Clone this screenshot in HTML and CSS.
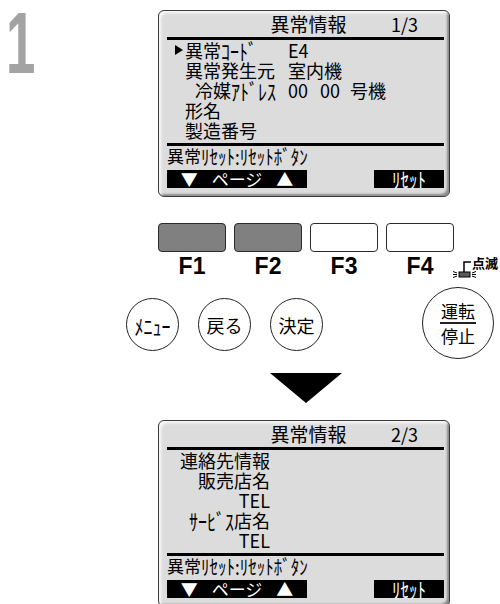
FILE: index.html
```html
<!DOCTYPE html>
<html lang="ja">
<head>
    <meta charset="UTF-8">
    <meta name="viewport" content="width=device-width, initial-scale=1.0">
    <link rel="stylesheet" href="styles.css">
</head>
<body>
    <div class="page">
        <div class="step"><span class="step-num">1</span></div>

        <div class="device">
            <div class="screen">
                <div class="title-row">
                    <span class="title">異常情報</span>
                    <span class="page-no">1/3</span>
                </div>
                <div class="rule"></div>
                <div class="rows">
                    <div class="row"><span class="marker"></span><span class="label">異常<span class="hw">ｺｰﾄﾞ</span></span><span class="value">E4</span></div>
                    <div class="row"><span></span><span class="label">異常発生元</span><span class="value">室内機</span></div>
                    <div class="row"><span></span><span class="label sub">冷媒<span class="hw">ｱﾄﾞﾚｽ</span></span><span class="value"><span class="num">00</span><span class="num num-2">00</span>号機</span></div>
                    <div class="row"><span></span><span class="label">形名</span></div>
                    <div class="row"><span></span><span class="label">製造番号</span></div>
                </div>
                <div class="rule rule-bottom"></div>
                <div class="hint">異常<span class="hw">ﾘｾｯﾄ:ﾘｾｯﾄﾎﾞﾀﾝ</span></div>
                <div class="soft-keys">
                    <span class="soft page-key"><span>▼</span><span>ページ</span><span>▲</span></span>
                    <span class="soft reset-key"><span class="hw">ﾘｾｯﾄ</span></span>
                </div>
            </div>

            <div class="keys">
                <div class="key key-on"></div>
                <div class="key key-on"></div>
                <div class="key"></div>
                <div class="key"></div>
            </div>
            <div class="key-labels">
                <span class="key-label">F1</span>
                <span class="key-label">F2</span>
                <span class="key-label">F3</span>
                <span class="key-label">F4</span>
                <div class="lamp">
                    <svg width="50" height="25" viewBox="0 0 50 25">
                        <path d="M14 17 V7 H21" fill="none" stroke="#000" stroke-width="1.5"/>
                        <rect x="9" y="17" width="11" height="5" fill="#5a5a5a" stroke="#000" stroke-width="1"/>
                        <g stroke="#000" stroke-width="1">
                            <line x1="7" y1="18" x2="3" y2="16.5"/>
                            <line x1="7" y1="19.5" x2="3" y2="19.5"/>
                            <line x1="7" y1="21" x2="3" y2="22.5"/>
                            <line x1="22" y1="18" x2="26" y2="16.5"/>
                            <line x1="22" y1="19.5" x2="26" y2="19.5"/>
                            <line x1="22" y1="21" x2="26" y2="22.5"/>
                        </g>
                    </svg>
                    <span class="lamp-text">点滅</span>
                </div>
            </div>

            <div class="controls">
                <div class="round"><span class="hw">ﾒﾆｭｰ</span></div>
                <div class="round">戻る</div>
                <div class="round">決定</div>
                <div class="power">
                    <span>運転</span>
                    <span class="power-line"></span>
                    <span>停止</span>
                </div>
            </div>

            <div class="next-arrow"></div>

            <div class="screen">
                <div class="title-row">
                    <span class="title">異常情報</span>
                    <span class="page-no">2/3</span>
                </div>
                <div class="rule"></div>
                <div class="rows rows-right">
                    <div>連絡先情報</div>
                    <div>販売店名</div>
                    <div>TEL</div>
                    <div><span class="hw">ｻｰﾋﾞｽ</span>店名</div>
                    <div>TEL</div>
                </div>
                <div class="rule rule-bottom"></div>
                <div class="hint">異常<span class="hw">ﾘｾｯﾄ:ﾘｾｯﾄﾎﾞﾀﾝ</span></div>
                <div class="soft-keys">
                    <span class="soft page-key"><span>▼</span><span>ページ</span><span>▲</span></span>
                    <span class="soft reset-key"><span class="hw">ﾘｾｯﾄ</span></span>
                </div>
            </div>
        </div>
    </div>
</body>
</html>
```

FILE: styles.css
```css
body {
    margin: 0;
    background: #fff;
    font-family: "Noto Sans CJK JP", sans-serif;
    color: #000;
}
.page {
    display: flex;
    height: 604px;
    overflow: hidden;
}
.step {
    width: 126px;
    flex-shrink: 0;
    font-family: "Liberation Sans", sans-serif;
    font-weight: bold;
    font-size: 88px;
    line-height: 86px;
    color: #a3a3a3;
}
.step-num {
    display: inline-block;
    margin-left: 6px;
    transform: scaleX(0.6);
    transform-origin: left top;
}
.device {
    width: 374px;
    flex-shrink: 0;
    padding-top: 10px;
}

/* half-width katakana are drawn as tall as the kanji on the LCD */
.hw {
    display: inline-block;
    line-height: 16px;
    transform: scaleY(1.22);
}

/* LCD screen */
.screen {
    box-sizing: border-box;
    width: 292px;
    height: 187px;
    margin-left: 32px;
    padding: 0 5px 0 8px;
    border: 1px solid #3a3a3a;
    border-radius: 6px;
    background: #dcdcdc;
    box-shadow: inset 3px 3px 3px -1px #fafafa, inset -3px -3px 2px -1px #8c8c8c;
}
.title-row {
    display: grid;
    grid-template-columns: 1fr auto 1fr;
    height: 26px;
    line-height: 26px;
    font-size: 19px;
}
.title {
    grid-column: 2;
    padding-left: 6px;
}
.page-no {
    grid-column: 3;
    justify-self: end;
    margin-right: 26px;
    font-size: 18px;
}
.rule {
    height: 3px;
    background: #000;
}
.rule-bottom {
    margin-top: 3px;
}
.rows {
    height: 100px;
    font-size: 18px;
    line-height: 20px;
}
.row {
    display: grid;
    grid-template-columns: 18px 103px auto;
    align-items: center;
    height: 20px;
}
.marker {
    width: 0;
    height: 0;
    margin-left: 8px;
    border-top: 5px solid transparent;
    border-bottom: 5px solid transparent;
    border-left: 8px solid #000;
}
.label.sub {
    padding-left: 10px;
}
.num {
    display: inline-block;
    width: 32px;
}
.num-2 {
    width: 30px;
}
.rows-right {
    width: 103px;
    text-align: right;
}
.hint {
    font-size: 17px;
    line-height: 20px;
}
.soft-keys {
    display: flex;
    justify-content: space-between;
    margin-top: 4px;
}
.soft {
    display: flex;
    justify-content: center;
    align-items: center;
    gap: 14px;
    height: 18px;
    line-height: 18px;
    background: #000;
    color: #fff;
    font-size: 17px;
}
.page-key {
    width: 140px;
}
.reset-key {
    width: 70px;
}

/* function keys */
.keys {
    display: flex;
    gap: 8px;
    margin: 26px 0 0 32px;
}
.key {
    box-sizing: border-box;
    width: 68px;
    height: 29px;
    border: 1px solid #2a2a2a;
    border-radius: 4px;
    background: #fff;
}
.key-on {
    background: #808080;
}
.key-labels {
    display: flex;
    gap: 8px;
    height: 25px;
    margin: 3px 0 0 32px;
}
.key-label {
    width: 68px;
    text-align: center;
    font-family: "Liberation Sans", sans-serif;
    font-weight: bold;
    font-size: 23px;
    line-height: 23px;
}
.lamp {
    position: relative;
    width: 50px;
    height: 25px;
    margin-left: -12px;
}
.lamp svg {
    display: block;
}
.lamp-text {
    position: absolute;
    left: 22px;
    top: 1px;
    font-size: 13px;
    line-height: 13px;
    font-weight: bold;
}

/* round buttons */
.controls {
    display: flex;
    align-items: flex-start;
    height: 72px;
    margin-top: 7px;
}
.round {
    box-sizing: border-box;
    width: 53px;
    height: 53px;
    margin-top: 11px;
    border: 1.5px solid #222;
    border-radius: 50%;
    display: flex;
    align-items: center;
    justify-content: center;
    font-size: 18px;
}
.round + .round {
    margin-left: 19px;
}
.power {
    box-sizing: border-box;
    width: 72px;
    height: 72px;
    margin-left: 99px;
    border: 1.5px solid #222;
    border-radius: 50%;
    display: flex;
    flex-direction: column;
    align-items: center;
    justify-content: center;
    font-size: 17px;
    line-height: 19px;
}
.power-line {
    width: 36px;
    height: 1.5px;
    margin: 2px 0;
    background: #222;
}

.next-arrow {
    width: 0;
    height: 0;
    margin: 14px 0 17px 144px;
    border-left: 36px solid transparent;
    border-right: 36px solid transparent;
    border-top: 30px solid #000;
}
```
